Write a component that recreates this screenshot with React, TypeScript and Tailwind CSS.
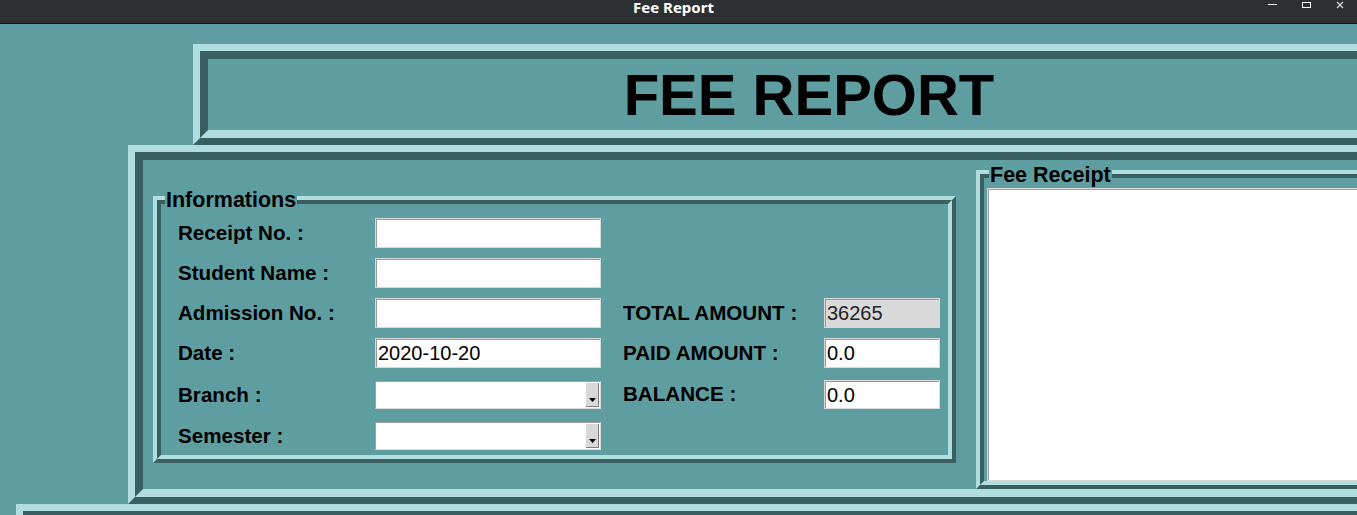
import React from 'react';

const leftRows = [
  { label: 'Receipt No. :', value: '', kind: 'entry', gap: 'mt-0', h: 'h-[30px]' },
  { label: 'Student Name :', value: '', kind: 'entry', gap: 'mt-[10px]', h: 'h-[30px]' },
  { label: 'Admission No. :', value: '', kind: 'entry', gap: 'mt-[10px]', h: 'h-[30px]' },
  { label: 'Date :', value: '2020-10-20', kind: 'entry', gap: 'mt-[10px]', h: 'h-[30px]' },
  { label: 'Branch :', value: '', kind: 'combo', gap: 'mt-[13px]', h: 'h-[28px]' },
  { label: 'Semester :', value: '', kind: 'combo', gap: 'mt-[13px]', h: 'h-[28px]' },
];

const rightRows = [
  { label: 'TOTAL AMOUNT :', value: '36265', readonly: true, gap: 'mt-[80px]', h: 'h-[30px]' },
  { label: 'PAID AMOUNT :', value: '0.0', readonly: false, gap: 'mt-[10px]', h: 'h-[30px]' },
  { label: 'BALANCE :', value: '0.0', readonly: false, gap: 'mt-[12px]', h: 'h-[29px]' },
];

function Entry({ value, width, height, readonly }: { value: string; width: string; height: string; readonly?: boolean }) {
  return (
    <div
      className={`${width} ${height} shrink-0 border border-[#d9d9d9] shadow-[inset_1px_1px_0_#999999] flex items-center pl-[2px] text-[20px] leading-none ${
        readonly ? 'bg-[#d9d9d9] text-[#222]' : 'bg-white text-black'
      }`}
    >
      {value}
    </div>
  );
}

function Combo({ height }: { height: string }) {
  return (
    <div className={`w-[226px] ${height} shrink-0 bg-white border border-t-[#a0a0a0] border-l-[#a0a0a0] border-b-[#dcdcdc] border-r-[#dcdcdc] flex justify-end p-[1px]`}>
      <div className="w-[13px] h-full bg-[#d9d9d9] border-r border-b border-[#808080] flex items-end justify-center pb-[4px]">
        <svg width="7" height="4" viewBox="0 0 7 4">
          <path d="M0 0h7L3.5 4z" fill="#000" />
        </svg>
      </div>
    </div>
  );
}

export default function App() {
  return (
    <div className="w-[1357px] h-[515px] overflow-hidden bg-[#5f9ea0] font-['Liberation_Sans',Arial,sans-serif]">
      {/* window title bar */}
      <div className="relative h-[24px] bg-[#2c3033] border-b border-[#141618] flex justify-center pr-[10px]">
        <span className="text-[15px] leading-[15px] font-bold text-white font-['Noto_Sans',sans-serif]">
          Fee Report
        </span>
        <div className="absolute right-0 top-0 h-[23px] flex items-start">
          <div className="w-[34px] flex justify-center pt-[4px]">
            <div className="w-[9px] h-[1px] bg-white" />
          </div>
          <div className="w-[34px] flex justify-center pt-[2px]">
            <div className="w-[9px] h-[6px] border border-white" />
          </div>
          <div className="w-[34px] flex justify-center pt-[1px]">
            <svg width="8" height="8" viewBox="0 0 8 8">
              <path d="M1 1l6 6M7 1L1 7" stroke="#dcdcdc" strokeWidth="1.2" />
            </svg>
          </div>
        </div>
      </div>

      {/* heading frame */}
      <div className="ml-[193px] mt-[20px] w-[1232px] h-[101px] border-[7px] border-t-[#afdde0] border-l-[#afdde0] border-b-[#395f60] border-r-[#395f60]">
        <div className="h-full border-[8px] border-t-[#395f60] border-l-[#395f60] border-b-[#afdde0] border-r-[#afdde0] flex items-center justify-center">
          <h1 className="text-[58px] font-bold leading-none text-black">FEE REPORT</h1>
        </div>
      </div>

      {/* main frame */}
      <div className="ml-[128px] w-[1300px] h-[359px] border-[7px] border-t-[#afdde0] border-l-[#afdde0] border-b-[#395f60] border-r-[#395f60]">
        <div className="h-full border-[8px] border-t-[#395f60] border-l-[#395f60] border-b-[#afdde0] border-r-[#afdde0] flex items-start pl-[10px]">
          {/* Informations */}
          <div className="relative shrink-0 mt-[36px] w-[803px] h-[267px] border-[4px] border-t-[#afdde0] border-l-[#afdde0] border-b-[#395f60] border-r-[#395f60]">
            <span className="absolute top-[-11px] left-[8px] px-[1px] bg-[#5f9ea0] text-[21.5px] leading-[22px] font-bold text-black">
              Informations
            </span>
            <div className="h-full border-[4px] border-t-[#395f60] border-l-[#395f60] border-b-[#afdde0] border-r-[#afdde0] pt-[14px] pl-[17px] flex">
              <div className="flex flex-col">
                {leftRows.map((r) => (
                  <div key={r.label} className={`flex items-center ${r.gap}`}>
                    <span className="w-[197px] shrink-0 text-[20.6px] font-bold leading-none text-black">{r.label}</span>
                    {r.kind === 'entry' ? (
                      <Entry value={r.value} width="w-[226px]" height={r.h} />
                    ) : (
                      <Combo height={r.h} />
                    )}
                  </div>
                ))}
              </div>
              <div className="flex flex-col ml-[22px]">
                {rightRows.map((r) => (
                  <div key={r.label} className={`flex items-center ${r.gap}`}>
                    <span className="w-[201px] shrink-0 text-[20.6px] font-bold leading-none text-black">{r.label}</span>
                    <Entry value={r.value} width="w-[116px]" height={r.h} readonly={r.readonly} />
                  </div>
                ))}
              </div>
            </div>
          </div>

          {/* Fee Receipt */}
          <div className="relative shrink-0 ml-[20px] mt-[10px] w-[500px] h-[319px] border-[4px] border-t-[#afdde0] border-l-[#afdde0] border-b-[#395f60] border-r-[#395f60]">
            <span className="absolute top-[-10px] left-[9px] px-[1px] bg-[#5f9ea0] text-[21.5px] leading-[22px] font-bold text-black">
              Fee Receipt
            </span>
            <div className="h-full border-[4px] border-t-[#395f60] border-l-[#395f60] border-b-[#afdde0] border-r-[#afdde0] pt-[10px] pl-[3px] flex flex-col">
              <div className="flex-1 bg-white border border-[#d9d9d9] shadow-[inset_1px_1px_0_#a0a0a0]" />
            </div>
          </div>
        </div>
      </div>

      {/* lower frame (cut off) */}
      <div className="ml-[16px] w-[1400px] h-[40px] border-t-[7px] border-l-[7px] border-t-[#afdde0] border-l-[#afdde0]">
        <div className="h-full border-t-[8px] border-l-[8px] border-t-[#395f60] border-l-[#395f60]" />
      </div>
    </div>
  );
}
